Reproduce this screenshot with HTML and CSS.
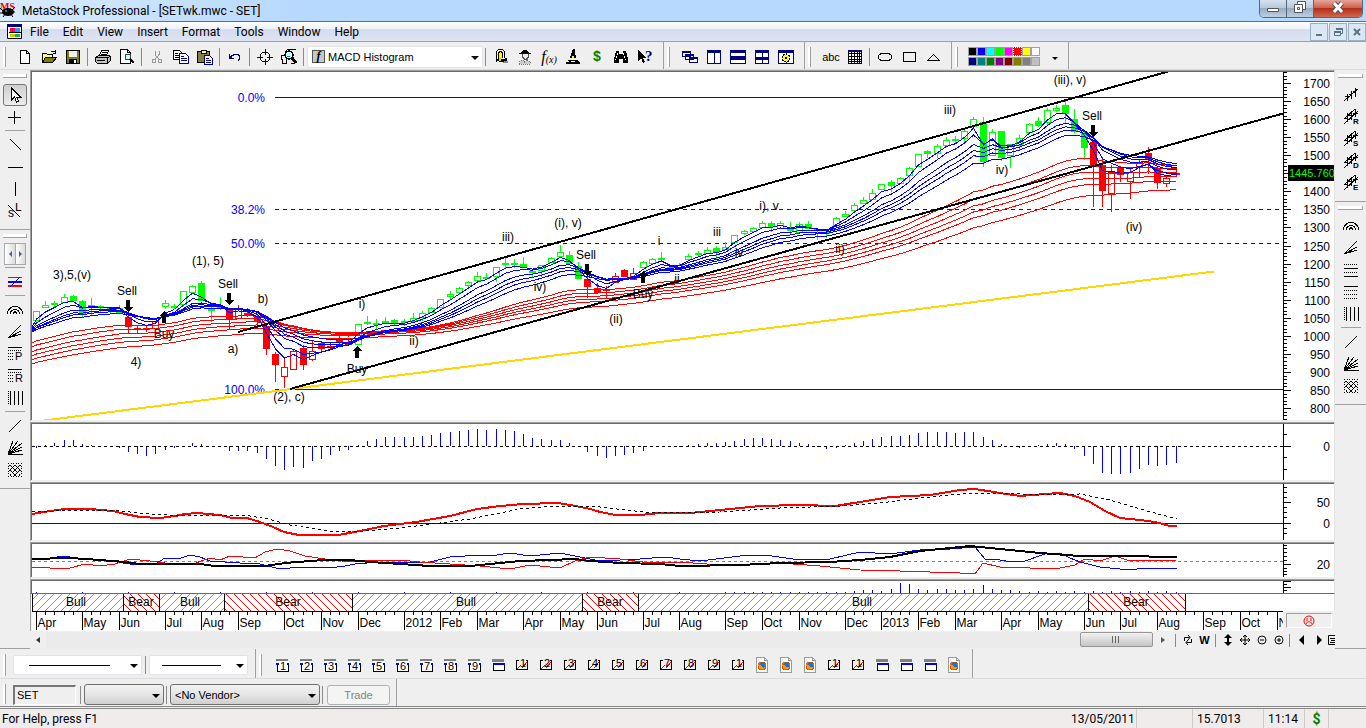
FILE: index.html
```
<!DOCTYPE html>
<html lang="en">
<head>
    <meta charset="UTF-8">
    <meta name="viewport" content="width=device-width, initial-scale=1.0">
    <title>MetaStock Professional - [SETwk.mwc - SET]</title>
    <link rel="stylesheet" href="styles.css">
</head>
<body>

    <!-- Icon symbols -->
    <svg class="symbols" aria-hidden="true">
        <symbol id="new" viewBox="0 0 16 16"><path d="M3.5 1.5h6l3 3v10h-9zM9.5 1.5v3h3" fill="#fff" stroke="#000"/></symbol>
        <symbol id="open" viewBox="0 0 16 16"><path d="M1.5 13.5v-9h4l1 1h5v3" fill="#ffff80" stroke="#000"/><path d="M1.5 13.5l3-5h11l-4 5z" fill="#808000" stroke="#000"/><path d="M9.5 3.5c1-2 3-2 5 0M14.5 1v3h-3" fill="none" stroke="#000"/></symbol>
        <symbol id="save" viewBox="0 0 16 16"><path d="M1.500 1.500h13v13h-13z" fill="#808000" stroke="#000"/><path d="M4 2h8v6H4z" fill="#efefef"/><path d="M4 10h8v5H4z" fill="#000"/><path d="M9 11h2v3H9z" fill="#fff"/></symbol>
        <symbol id="print" viewBox="0 0 16 16"><path d="M4.500 6.500l2-5h7l-2 5" fill="#fff" stroke="#000"/><path d="M6.500 3.500h5M6 5.500h5" stroke="#000"/><path d="M.5 8.500l3-2h10l2 1v4l-3 3h-10l-2-2z" fill="#c0c0c0" stroke="#000"/><path d="M.5 8.500h12v6M2 11.500h8M12.500 8.500l3-1" fill="none" stroke="#000"/><path d="M8 12h2v1H8z" fill="#ff0"/></symbol>
        <symbol id="preview" viewBox="0 0 16 16"><path d="M1.500.5h7l3 3v11h-10zM8.500.5v3h3" fill="#fff" stroke="#000"/><circle cx="9" cy="8" r="3" fill="#bff" stroke="#444"/><path d="M11 10l4 4" stroke="#000" stroke-width="2"/></symbol>
        <symbol id="cut" viewBox="0 0 16 16"><path d="M6 1.500v4l4 5M10 1.500v4l-4 5" fill="none" stroke="#999"/><circle cx="5" cy="12" r="2" fill="none" stroke="#999"/><circle cx="11" cy="12" r="2" fill="none" stroke="#999"/></symbol>
        <symbol id="copy" viewBox="0 0 16 16"><path d="M.5 1.500h6l2 2v7h-8z" fill="#fff" stroke="#000"/><path d="M2 4.500h3M2 6.500h4M2 8.500h4" stroke="#000"/><path d="M6.500 4.500h6l3 3v7h-9z" fill="#fff" stroke="#000080"/><path d="M8 7.500h3M8 9.500h6M8 11.500h6" stroke="#000080"/></symbol>
        <symbol id="paste" viewBox="0 0 16 16"><path d="M.5 2.500h12v11h-12z" fill="#808040" stroke="#000"/><path d="M4 1h5v3H4z" fill="#ff8" stroke="#000"/><path d="M7.500 6.500h5l3 3v6h-8z" fill="#fff" stroke="#000080"/><path d="M9 9.500h3M9 11.500h5M9 13.500h5" stroke="#000080"/></symbol>
        <symbol id="undo" viewBox="0 0 16 16"><path d="M3 8.500c3-4 10-4 10 0 0 2-1 2-2 3M2.500 5v4h4" fill="none" stroke="#000080"/><path d="M2 6v4h4z" fill="#000080"/></symbol>
        <symbol id="target" viewBox="0 0 16 16"><circle cx="8" cy="8" r="5" fill="none" stroke="#000"/><path d="M8.500 0v6M8.500 10v6M0 8.500h6M10 8.500h6" stroke="#000080"/></symbol>
        <symbol id="magnify" viewBox="0 0 16 16"><path d="M3.500 3.500l3-3h8M.5 6.500h5v8h-4v-4h-1zM9.500 14h3" fill="none" stroke="#000"/><circle cx="8" cy="6" r="4" fill="#bff" stroke="#000" stroke-width="1.500"/><path d="M6 7h3" stroke="#088"/><path d="M11 9l4 5" stroke="#000" stroke-width="3"/></symbol>
        <symbol id="alert" viewBox="0 0 16 16"><path d="M3.500 13V4c0-5 8-5 8 0v5" fill="#fff" stroke="#000"/><path d="M5.500 10V5c0-3 4-3 4 0v4" fill="#ff0" stroke="#000"/><path d="M4 10h5l5-1v4H7l-3-1z" fill="#000"/><path d="M6 8h2v4H6z" fill="#dd0"/><path d="M12 12h3v2H9z" fill="#888"/></symbol>
        <symbol id="advisor" viewBox="0 0 16 16"><path d="M4 4c0-4 8-4 8 0" fill="#000"/><path d="M2 4h12v1H2z" fill="#000080"/><path d="M5.500 5v3l2 2h2l2-2V5" fill="#eee" stroke="#555"/><path d="M2.500 15v-2l3-2 2 2 3-2 3 2v2z" fill="#ccc" stroke="#777" stroke-dasharray="1 1"/></symbol>
        <symbol id="tester" viewBox="0 0 16 16"><path d="M8 0h2v3l1 6H5l2-6z" fill="#000"/><path d="M7 7h2v2H7z" fill="#ff0"/><path d="M3 11h9l2 2h1v2H1v-2h3z" fill="#000"/><path d="M6 12h4" stroke="#fff"/></symbol>
        <symbol id="binoc" viewBox="0 0 16 16"><path d="M3 2h3v3h4V2h3l2 8v4h-5v-4H6v4H1v-4z" fill="#000"/><path d="M4.500 4l-2 7M10.500 4l2 7" stroke="#fff" stroke-dasharray="2 1"/></symbol>
        <symbol id="cursor" viewBox="0 0 16 16"><path d="M4.500 1v12l3-3 2 5 2-1-2-4h4z" fill="#fff" stroke="#000"/></symbol>
        <symbol id="cascade" viewBox="0 0 16 16"><path d="M.5 2.500h8v5h-8zM3.500 5.500h8v5h-8zM7.500 8.500h8v5h-8z" fill="#fff" stroke="#000080"/><path d="M0 2h9v2H0zM3 5h9v2H3zM7 8h9v2H7z" fill="#000080"/></symbol>
        <symbol id="cols" viewBox="0 0 16 16"><path d="M1.500 1.500h13v13h-13zM8 2v12" fill="#fff" stroke="#000080"/><path d="M1 1h14v3H1z" fill="#000080"/></symbol>
        <symbol id="rows" viewBox="0 0 16 16"><path d="M.5 1.500h15v6H.5zM.5 8.500h15v6H.5z" fill="#fff" stroke="#000080"/><path d="M0 1h16v3H0zM0 8h16v3H0z" fill="#000080"/></symbol>
        <symbol id="tiles" viewBox="0 0 16 16"><path d="M1.500 1.500h13v13h-13zM8 1v14" fill="#fff" stroke="#000080"/><path d="M1 1h14v3H1zM1 8h14v3H1z" fill="#000080"/></symbol>
        <symbol id="layout" viewBox="0 0 16 16"><path d="M.5 1.500h15v13H.5zM8 1v14" fill="#fff" stroke="#000080"/><path d="M0 1h16v3H0z" fill="#000080"/><circle cx="8" cy="9" r="4" fill="#ff0" stroke="#000" stroke-dasharray="2 1"/><circle cx="8" cy="9" r="3" fill="#ff0"/><circle cx="8" cy="9" r="1" fill="#000"/></symbol>
        <symbol id="grid" viewBox="0 0 16 16"><path d="M1.500 1.500h13v13h-13zM1 4.500h14M1 7.500h14M1 10.500h14M1 12.500h14M4.500 1v14M7.500 1v14M10.500 1v14M12.500 1v14" fill="#fff" stroke="#000"/><path d="M1 1h14v2H1z" fill="#000080"/></symbol>
        <symbol id="ellipse" viewBox="0 0 16 16"><ellipse cx="8" cy="8" rx="7" ry="4" fill="none" stroke="#000"/></symbol>
        <symbol id="rect" viewBox="0 0 16 16"><path d="M2.500 3.500h12v9h-12z" fill="none" stroke="#000"/></symbol>
        <symbol id="tri" viewBox="0 0 16 16"><path d="M2.500 11.500h12l-6-6z" fill="none" stroke="#000"/></symbol>
        <symbol id="plus" viewBox="0 0 16 16"><path d="M1 8.500h13M7.500 2v13" stroke="#000"/></symbol>
        <symbol id="back" viewBox="0 0 16 16"><path d="M3 2l11 11" stroke="#000"/></symbol>
        <symbol id="hline" viewBox="0 0 16 16"><path d="M1 8.500h15" stroke="#000"/></symbol>
        <symbol id="vline" viewBox="0 0 16 16"><path d="M8.500 1v14" stroke="#000"/></symbol>
        <symbol id="stop" viewBox="0 0 16 16"><path d="M1 2l12 12" stroke="#000"/><text x="8" y="8">L</text><text x="1" y="14">s</text></symbol>
        <symbol id="multi" viewBox="0 0 16 16"><path d="M1 3.500h14" stroke="#008000"/><path d="M1 8h14" stroke="#00f" stroke-width="2"/><path d="M1 12h14" stroke="#f00" stroke-width="2"/><path d="M3 13L13 3" stroke="#00f"/></symbol>
        <symbol id="arcs" viewBox="0 0 16 16"><path d="M.5 12c0-10 15-10 15 0M3.500 12c0-6 9-6 9 0M6.500 12c0-3 3-3 3 0" fill="none" stroke="#000"/></symbol>
        <symbol id="fan" viewBox="0 0 16 16"><path d="M1 14L14 1M1 14l13-7M1 14l13-4" stroke="#000"/></symbol>
        <symbol id="proj" viewBox="0 0 16 16"><path d="M1 1.500h14" stroke="#000"/><path d="M1 4.500h14M1 7.500h6M1 10.500h6M1 13.500h6" stroke="#000" stroke-dasharray="1 1"/></symbol>
        <symbol id="fib" viewBox="0 0 16 16"><path d="M1 2.500h14M1 10.500h14" stroke="#000" stroke-dasharray="1 1"/><path d="M1 6.500h14M1 14.500h14" stroke="#000"/></symbol>
        <symbol id="quad" viewBox="0 0 16 16"><path d="M1 2.500h14" stroke="#000"/><path d="M1 6.500h14M1 10.500h14M1 14.500h14" stroke="#000" stroke-dasharray="1 1"/></symbol>
        <symbol id="bars" viewBox="0 0 16 16"><path d="M1.500 1v14" stroke="#000" stroke-dasharray="1 1"/><path d="M3.500 1v14M7.500 1v14M11.500 1v14M15.500 1v14" stroke="#000"/></symbol>
        <symbol id="slash" viewBox="0 0 16 16"><path d="M2 14L14 2" stroke="#000"/></symbol>
        <symbol id="gann" viewBox="0 0 16 16"><path d="M1 14.500h15M1 14L6 1M1 14L11 1M1 14L15 3M1 14l14-7M1 14l14-4" stroke="#000"/></symbol>
        <symbol id="mesh" viewBox="0 0 16 16"><path d="M1 1l14 14M6 1l9 9M11 1l4 4M1 6l9 9M1 11l4 4M15 1L1 15M10 1L1 10M5 1L1 5M15 6l-9 9M15 11l-4 4" stroke="#000" stroke-dasharray="2 1"/></symbol>
        <symbol id="regress" viewBox="0 0 16 16"><path d="M1 14L15 2M4.500 7v7M8.500 4v8M12.500 1v9M2 9h2M6 7h2M10 4h2M13 2h2" stroke="#000"/></symbol>
        <symbol id="channel" viewBox="0 0 16 16"><path d="M1 10L12 0M1 15L15 2M4.500 4v9M8.500 2v9M12.500 0v8M2 9h2M6 6h2M10 4h5" stroke="#000"/></symbol>
        <symbol id="win" viewBox="0 0 16 16"><path d="M2 2h12v3H2z" fill="#808080"/><path d="M3.500 6.500h11v7h-11z" fill="#fff" stroke="#000"/><path d="M3 6h12v2H3z" fill="#00f"/></symbol>
        <symbol id="numwin" viewBox="0 0 16 16"><path d="M2 2h12v2H2z" fill="#808080"/><path d="M3 4h12v10H3z" fill="#fff"/><path d="M5 6.500H3.500v8h11v-8H13" fill="none" stroke="#000"/><path d="M2 6h3v2H2zM13 6h2v2h-2z" fill="#00f"/></symbol>
        <symbol id="numchart" viewBox="0 0 16 16"><path d="M5 3.500H2.500v9h11v-9H12" fill="none" stroke="#000"/><path d="M3 12l4-4M8 11l5-6" stroke="#f00"/></symbol>
        <symbol id="fox" viewBox="0 0 16 16"><path d="M2.500.5h8l3 3v12h-11zM10.500.5v3h3" fill="#fff" stroke="#999"/><circle cx="8" cy="9" r="4.500" fill="#e66000"/><circle cx="8.500" cy="8" r="3" fill="#2c6fb5"/><path d="M4 8c1 5 5 5 8 2-2 1-4 1-5-2z" fill="#ff9500"/></symbol>
    </svg>

    <!-- Title bar -->
    <header class="titlebar">
        <svg class="logo" viewBox="0 0 16 18"><text x="0" y="10">MS</text><ellipse cx="8" cy="12" rx="6" ry="4" fill="#000"/><path d="M0 8l4 4M0 13h4M3 17l3-4M10 13l3 4M12 12h3M11 11l4-4" stroke="#000"/><circle cx="6" cy="11" r="1" fill="#0aa"/></svg>
        <h1>MetaStock Professional - [SETwk.mwc - SET]</h1>
        <div class="window-buttons">
            <button aria-label="Minimize"><svg viewBox="0 0 16 16"><path d="M2.500 8.500h11v3h-11z" fill="#fff" stroke="#555"/></svg></button>
            <button aria-label="Restore"><svg viewBox="0 0 16 16"><path d="M5.500 1.500h8v8h-8z" fill="#fff" stroke="#555"/><path d="M2.500 4.500h8v8h-8z" fill="#fff" stroke="#555"/><path d="M5.500 7.500h2v2h-2z" fill="none" stroke="#555"/></svg></button>
            <button class="close" aria-label="Close"><svg viewBox="0 0 16 16"><path d="M4 3l8 9M12 3l-8 9" stroke="#555" stroke-width="5"/><path d="M4 3l8 9M12 3l-8 9" stroke="#fff" stroke-width="3"/></svg></button>
        </div>
    </header>

    <!-- Menu -->
    <nav class="menubar">
        <svg class="doc-icon" viewBox="0 0 15 15"><path d="M.5.5h14v14H.5z" fill="#fff" stroke="#000"/><path d="M0 0h15v3H0z" fill="#000080"/><path d="M3 4h10v4H3z" fill="#f05"/><path d="M8 4h5v4H8z" fill="#29f"/><path d="M3 10h10v3H3z" fill="#cc0"/><path d="M8 10h5v3H8z" fill="#2a4"/><path d="M2 8.500h12" stroke="#000"/></svg>
        <button>File</button>
        <button>Edit</button>
        <button>View</button>
        <button>Insert</button>
        <button>Format</button>
        <button>Tools</button>
        <button>Window</button>
        <button>Help</button>
        <div class="mdi-buttons">
            <button aria-label="Minimize chart"><svg viewBox="0 0 16 16"><path d="M5 11h6" stroke="#5d7285" stroke-width="2"/></svg></button>
            <button aria-label="Restore chart"><svg viewBox="0 0 16 16"><path d="M6.500 6V4.500h6v5H11M4.500 7.500h6v4h-6z" fill="none" stroke="#5d7285"/><path d="M6 4h7v2H6zM4 7h7v2H4z" fill="#5d7285"/></svg></button>
            <button aria-label="Close chart"><svg viewBox="0 0 16 16"><path d="M5 5l6 6M11 5l-6 6" stroke="#5d7285" stroke-width="2"/></svg></button>
        </div>
    </nav>

    <!-- Main toolbars -->
    <div class="toolbars">
        <div class="group">
            <button class="tool" aria-label="New"><svg><use href="#new"/></svg></button>
            <button class="tool" aria-label="Open"><svg><use href="#open"/></svg></button>
            <button class="tool" aria-label="Save"><svg><use href="#save"/></svg></button>
            <i class="sep"></i>
            <button class="tool" aria-label="Print"><svg><use href="#print"/></svg></button>
            <button class="tool" aria-label="Print preview"><svg><use href="#preview"/></svg></button>
            <i class="sep"></i>
            <button class="tool" aria-label="Cut"><svg><use href="#cut"/></svg></button>
            <button class="tool" aria-label="Copy"><svg><use href="#copy"/></svg></button>
            <button class="tool" aria-label="Paste"><svg><use href="#paste"/></svg></button>
            <i class="sep"></i>
            <button class="tool" aria-label="Undo"><svg><use href="#undo"/></svg></button>
            <i class="sep"></i>
            <button class="tool" aria-label="Crosshair"><svg><use href="#target"/></svg></button>
            <button class="tool" aria-label="Data window"><svg><use href="#magnify"/></svg></button>
            <i class="sep"></i>
            <span class="combo indicator">
                <b class="badge">f</b>
                <select aria-label="Indicator"><option>MACD Histogram</option></select>
            </span>
            <i class="sep"></i>
            <button class="tool" aria-label="Alerts"><svg><use href="#alert"/></svg></button>
            <button class="tool" aria-label="Expert advisor"><svg><use href="#advisor"/></svg></button>
            <button class="tool fx">f<small>(x)</small></button>
            <button class="tool" aria-label="System tester"><svg><use href="#tester"/></svg></button>
            <button class="tool dollar">$</button>
            <button class="tool" aria-label="Explorer"><svg><use href="#binoc"/></svg></button>
            <button class="tool help" aria-label="Help"><svg viewBox="0 0 16 16"><path d="M1 1v11l3-3 2 5 2-1-2-4h4z" fill="#000"/><text x="8" y="12">?</text></svg></button>
        </div>
        <div class="group">
            <button class="tool" aria-label="Cascade"><svg><use href="#cascade"/></svg></button>
            <button class="tool" aria-label="Columns"><svg><use href="#cols"/></svg></button>
            <button class="tool" aria-label="Rows"><svg><use href="#rows"/></svg></button>
            <button class="tool" aria-label="Tile"><svg><use href="#tiles"/></svg></button>
            <button class="tool" aria-label="Layout"><svg><use href="#layout"/></svg></button>
        </div>
        <div class="group">
            <button class="tool abc">abc</button>
            <button class="tool" aria-label="Grid"><svg><use href="#grid"/></svg></button>
            <i class="sep"></i>
            <button class="tool" aria-label="Ellipse"><svg><use href="#ellipse"/></svg></button>
            <button class="tool" aria-label="Rectangle"><svg><use href="#rect"/></svg></button>
            <button class="tool" aria-label="Triangle"><svg><use href="#tri"/></svg></button>
        </div>
        <div class="group">
            <div class="palette" id="palette"></div>
            <button class="more" aria-label="More colors"></button>
        </div>
    </div>

    <main class="workspace">
        <!-- Line tools -->
        <aside class="sidebar">
            <div class="vgroup">
                <button class="vtool active" aria-label="Select"><svg><use href="#cursor"/></svg></button>
                <button class="vtool" aria-label="Crosshair"><svg><use href="#plus"/></svg></button>
                <i class="hsep"></i>
                <button class="vtool" aria-label="Trendline"><svg><use href="#back"/></svg></button>
                <button class="vtool" aria-label="Horizontal line"><svg><use href="#hline"/></svg></button>
                <button class="vtool" aria-label="Vertical line"><svg><use href="#vline"/></svg></button>
                <button class="vtool" aria-label="Stop and limit"><svg><use href="#stop"/></svg></button>
            </div>
            <div class="vgroup">
                <div class="spin">
                    <button class="prev" aria-label="Previous"></button>
                    <button class="next" aria-label="Next"></button>
                </div>
                <i class="hsep"></i>
                <button class="vtool" aria-label="Line styles"><svg><use href="#multi"/></svg></button>
                <i class="hsep"></i>
                <button class="vtool" aria-label="Fibonacci arcs"><svg><use href="#arcs"/></svg></button>
                <button class="vtool" aria-label="Fibonacci fan"><svg><use href="#fan"/></svg></button>
                <button class="vtool proj" aria-label="Projection"><svg viewBox="0 0 16 16"><use href="#proj"/><text x="8" y="14">P</text></svg></button>
                <button class="vtool proj" aria-label="Retracement"><svg viewBox="0 0 16 16"><use href="#proj"/><text x="8" y="14">R</text></svg></button>
                <button class="vtool" aria-label="Time zones"><svg><use href="#bars"/></svg></button>
                <i class="hsep"></i>
                <button class="vtool" aria-label="Gann line"><svg><use href="#slash"/></svg></button>
                <button class="vtool" aria-label="Gann fan"><svg><use href="#gann"/></svg></button>
                <button class="vtool" aria-label="Gann grid"><svg><use href="#mesh"/></svg></button>
            </div>
        </aside>

        <!-- Chart panes -->
        <section class="chart">
            <div class="pane price">
                <svg class="plot" id="pricePlot"></svg>
                <svg class="axis" id="priceAxis"></svg>
            </div>
            <div class="pane medium">
                <svg class="plot" id="histPlot"></svg>
                <svg class="axis" id="histAxis"></svg>
            </div>
            <div class="pane medium">
                <svg class="plot" id="macdPlot"></svg>
                <svg class="axis" id="macdAxis"></svg>
            </div>
            <div class="pane small">
                <svg class="plot" id="dmiPlot"></svg>
                <svg class="axis" id="dmiAxis"></svg>
            </div>
            <div class="pane volume">
                <svg class="plot" id="volPlot"></svg>
                <svg class="axis" id="volAxis"></svg>
            </div>
            <div class="trend"><svg id="trend"></svg></div>
            <div class="timeline">
                <svg class="plot" id="timeline"></svg>
                <div class="mood"><svg viewBox="0 0 12 12"><circle cx="6" cy="6" r="5" fill="none" stroke="#f00"/><path d="M4 3v3M8 3v3M3 9c1-3 5-3 6 0" fill="none" stroke="#f00"/></svg></div>
            </div>
            <div class="scroll">
                <button class="arrow left" aria-label="Scroll left"></button>
                <div class="track"><button class="thumb" aria-label="Scroll position"></button></div>
                <button class="arrow right" aria-label="Scroll right"></button>
                <i class="sep"></i>
                <button class="mini" aria-label="Refresh"><svg viewBox="0 0 12 12"><path d="M2.500 7V3.500h5M6 1l2 2.500L6 6M9.500 5v3.500h-5M6 6L4 8.500 6 11" fill="none" stroke="#000"/></svg></button>
                <button class="mini">W</button>
                <i class="sep"></i>
                <button class="mini" aria-label="Scale"><svg viewBox="0 0 12 12"><path d="M6 1v10" stroke="#000" stroke-width="2"/><path d="M2 4l4-4 4 4zM2 8l4 4 4-4z"/></svg></button>
                <button class="mini" aria-label="Move"><svg viewBox="0 0 12 12"><path d="M6 1v10M1 6h10M4 3l2-2 2 2M4 9l2 2 2-2M3 4L1 6l2 2M9 4l2 2-2 2" fill="none" stroke="#000"/></svg></button>
                <button class="mini" aria-label="Zoom out"><svg viewBox="0 0 12 12"><circle cx="6" cy="6" r="4" fill="none" stroke="#000"/><path d="M4 6h4" stroke="#000"/></svg></button>
                <button class="mini" aria-label="Zoom in"><svg viewBox="0 0 12 12"><circle cx="6" cy="6" r="4" fill="none" stroke="#000"/><path d="M4 6h4M6 4v4" stroke="#000"/></svg></button>
                <i class="sep"></i>
                <button class="mini" aria-label="Previous security"><svg viewBox="0 0 12 12"><path d="M8 1v10L3 6z"/></svg></button>
                <button class="mini" aria-label="Next security"><svg viewBox="0 0 12 12"><path d="M4 1v10l5-5z"/></svg></button>
                <button class="mini list" aria-label="Choose security"><svg viewBox="0 0 8 12"><path d="M8 1.500H1.500v9H8M3 4.500h5M4 6.500h4M3 8.500h5" fill="none" stroke="#000"/></svg></button>
            </div>
        </section>

        <aside class="sidebar right">
            <div class="vgroup">
                <button class="vtool" aria-label="Regression"><svg><use href="#regress"/></svg></button>
                <button class="vtool channel" aria-label="Raff channel"><svg viewBox="0 0 16 16"><use href="#channel"/><text x="10" y="15">R</text></svg></button>
                <button class="vtool channel" aria-label="Standard deviation channel"><svg viewBox="0 0 16 16"><use href="#channel"/><text x="10" y="15">S</text></svg></button>
                <button class="vtool channel" aria-label="Deviation channel"><svg viewBox="0 0 16 16"><use href="#channel"/><text x="10" y="15">D</text></svg></button>
                <button class="vtool channel" aria-label="Error channel"><svg viewBox="0 0 16 16"><use href="#channel"/><text x="10" y="15">E</text></svg></button>
            </div>
            <div class="vgroup">
                <button class="vtool" aria-label="Arcs"><svg><use href="#arcs"/></svg></button>
                <button class="vtool" aria-label="Fan"><svg><use href="#fan"/></svg></button>
                <button class="vtool" aria-label="Retracement levels"><svg><use href="#fib"/></svg></button>
                <button class="vtool" aria-label="Quadrant lines"><svg><use href="#quad"/></svg></button>
                <button class="vtool" aria-label="Cycle lines"><svg><use href="#bars"/></svg></button>
                <i class="hsep"></i>
                <button class="vtool" aria-label="Line"><svg><use href="#slash"/></svg></button>
                <button class="vtool" aria-label="Speed fan"><svg><use href="#gann"/></svg></button>
                <button class="vtool" aria-label="Mesh"><svg><use href="#mesh"/></svg></button>
            </div>
        </aside>
    </main>

    <!-- Line style and template toolbars -->
    <div class="toolbars bottom">
        <div class="group">
            <span class="combo line-style"><select aria-label="Line style"><option></option></select></span>
            <i class="sep"></i>
            <span class="combo line-weight"><select aria-label="Line weight"><option></option></select></span>
        </div>
        <div class="group" id="templates"></div>
    </div>

    <!-- Trading toolbar -->
    <div class="toolbars trading">
        <div class="group">
            <input class="symbol" type="text" value="SET" aria-label="Symbol">
            <i class="sep"></i>
            <span class="combo raised account"><select aria-label="Account"><option></option></select></span>
            <i class="sep"></i>
            <span class="combo raised vendor"><select aria-label="Vendor"><option>&lt;No Vendor&gt;</option></select></span>
            <i class="sep"></i>
            <button class="trade" disabled>Trade</button>
        </div>
    </div>

    <footer class="statusbar">
        <span class="help-text">For Help, press F1</span>
        <span class="cell date">13/05/2011</span>
        <span class="cell blank"></span>
        <span class="cell value">15.7013</span>
        <span class="cell time">11:14</span>
        <span class="cell money">$</span>
        <span class="cell last"></span>
    </footer>

    <script src="chart.js"></script>
</body>
</html>
```
FILE: styles.css
```
* {
    box-sizing: border-box;
}

body {
    margin: 0;
    min-height: 100vh;
    display: flex;
    flex-direction: column;
    font-family: Roboto, "Noto Sans", sans-serif;
    font-size: 12px;
    color: #000;
    background: #efefef;
}

button,
select,
input {
    font: inherit;
    color: inherit;
    margin: 0;
    padding: 0;
    border: none;
    border-radius: 0;
    background: none;
}

.symbols {
    position: absolute;
    width: 0;
    height: 0;
}

svg {
    display: block;
    font-family: "Liberation Sans", Arial, sans-serif;
}

/* Title bar */
.titlebar {
    display: flex;
    height: 22px;
    background: linear-gradient(to right, #d9ebfe, #b7d9fd 22%, #b7d9fd);
    border-bottom: 1px solid #5f6f80;
}

.logo {
    width: 16px;
    height: 18px;
    margin-right: 6px;
    font-family: "Liberation Serif", serif;
    font-size: 10px;
    font-weight: bold;
    fill: #e00;
}

.titlebar h1 {
    flex: 1;
    margin: 0;
    font-size: 12px;
    font-weight: 400;
    line-height: 22px;
}

.window-buttons {
    display: flex;
    height: 18px;
    margin-right: 3px;
    border: 1px solid #58677a;
    border-top: none;
    border-radius: 0 0 5px 5px;
    overflow: hidden;
}

.window-buttons button {
    width: 27px;
    display: flex;
    justify-content: center;
    border-right: 1px solid #58677a;
    background: linear-gradient(#d5e2ef, #b9c9da 45%, #98acc2 50%, #bdd0e2);
}

.window-buttons .close {
    width: 48px;
    border-right: none;
    background: linear-gradient(#e5a79b, #d0604c 45%, #b5301b 50%, #d0664c);
}

.window-buttons svg {
    width: 16px;
    height: 16px;
}

/* Menu */
.menubar {
    display: flex;
    align-items: center;
    height: 20px;
    padding-left: 7px;
    background: linear-gradient(#fff, #eef1f8 35%, #d6dcee 40%, #dfe4f3);
    border-bottom: 1px solid #a0a0a0;
}

.doc-icon {
    width: 15px;
    height: 15px;
    margin-right: 1px;
}

.menubar > button {
    padding: 0 7px;
}

.mdi-buttons {
    display: flex;
    gap: 1px;
    margin-left: auto;
}

.mdi-buttons button {
    width: 18px;
    height: 18px;
    border: 1px solid #9bb0c4;
    background: #dbe7f3;
}

/* Toolbars */
.toolbars {
    display: flex;
    height: 28px;
    background: #efefef;
    border-bottom: 1px solid #dcdcdc;
}

.group {
    position: relative;
    display: flex;
    align-items: center;
    padding: 2px 6px 0 13px;
    border-right: 1px solid #a0a0a0;
}

.group + .group {
    padding-left: 14px;
}

.group::before {
    content: "";
    position: absolute;
    left: 3px;
    top: 5px;
    bottom: 2px;
    width: 2px;
    border-right: 1px solid #a0a0a0;
    background: #fff;
}

.tool {
    width: 24px;
    height: 24px;
    display: flex;
    align-items: center;
    justify-content: center;
}

.tool svg,
.vtool svg {
    width: 16px;
    height: 16px;
    shape-rendering: crispEdges;
}

.sep {
    width: 1px;
    height: 18px;
    margin: 0 3px 0 2px;
    background: #8a8a8a;
}

.combo {
    position: relative;
    display: flex;
    align-items: center;
    height: 22px;
    background: #fff;
    border: 1px solid #e0e3ea;
    border-radius: 2px;
    font-family: "Liberation Sans", Arial, sans-serif;
    font-size: 11px;
}

.combo select {
    flex: 1;
    height: 100%;
    appearance: none;
    outline: none;
}

.combo::after,
.more::after {
    content: "";
    position: absolute;
    right: 3px;
    top: 9px;
    border: 4px solid transparent;
    border-top-color: #000;
    border-bottom: none;
    pointer-events: none;
}

.indicator {
    width: 176px;
}

.badge {
    width: 13px;
    height: 13px;
    margin: 0 3px 0 4px;
    border: 1px solid #555;
    background: #c8c8c8;
    font: italic bold 12px/10px "Liberation Serif", serif;
    text-align: center;
}

.fx {
    font: italic 16px "Liberation Serif", serif;
}

.fx small {
    font-size: 10px;
    padding-top: 5px;
}

.dollar {
    color: #008000;
    font: bold 14px "Liberation Mono", monospace;
}

.help text {
    font: bold 15px "Liberation Serif", serif;
    fill: #000080;
}

.abc {
    font: 11px "Liberation Sans", Arial, sans-serif;
}

.palette {
    display: grid;
    grid-template-columns: repeat(8, 9px);
    gap: 1px 0;
    padding-left: 2px;
}

.palette button {
    height: 9px;
    border: 1px solid #a0a0a0;
}

.palette .chosen {
    border: 1px dotted #fff;
}

.more {
    position: relative;
    width: 22px;
    height: 24px;
}

.more::after {
    right: 4px;
    top: 12px;
    border-width: 3px;
    border-bottom: none;
}

/* Workspace */
.workspace {
    display: flex;
}

.sidebar {
    width: 30px;
    flex: none;
    border-bottom: 1px solid #a0a0a0;
}

.vgroup {
    position: relative;
    display: flex;
    flex-direction: column;
    align-items: center;
    padding: 14px 0 7px;
    border-bottom: 1px solid #a0a0a0;
}

.vgroup + .vgroup {
    padding-top: 13px;
}

.vgroup::before {
    content: "";
    position: absolute;
    left: 3px;
    right: 3px;
    top: 4px;
    height: 3px;
    background: #fff;
    border-bottom: 1px solid #a0a0a0;
    border-right: 1px solid #a0a0a0;
}

.sidebar.right {
    width: 31px;
}

.vtool {
    width: 24px;
    height: 22px;
    display: flex;
    align-items: center;
    justify-content: center;
}

.vtool text {
    font: bold 9px "Liberation Serif", serif;
}

.proj text {
    font: 11px "Liberation Sans", Arial, sans-serif;
}

.channel text {
    font: bold 8px "Liberation Sans", Arial, sans-serif;
}

.vtool.active {
    border: 1px solid #777;
    border-radius: 3px;
    background: linear-gradient(#cfcfcf, #ececec);
}

.hsep {
    width: 20px;
    height: 1px;
    margin: 2px 0 3px;
    background: #a0a0a0;
}

.spin {
    display: flex;
    height: 22px;
    border: 1px solid #a9a9b0;
}

.spin button {
    display: flex;
    width: 10px;
    align-items: center;
    justify-content: center;
    background: linear-gradient(to right, #fff, #dcdcdc);
}

.spin .prev::after {
    content: "";
    border: 3px solid transparent;
    border-right-color: #4a5f95;
    border-left: none;
}

.spin .next::after {
    content: "";
    border: 3px solid transparent;
    border-left-color: #4a5f95;
    border-right: none;
}

.spin .next {
    border-left: 1px solid #a9a9b0;
}

/* Chart */
.chart {
    flex: 1;
    min-width: 0;
}

.pane {
    display: flex;
    height: 60px;
    background: #fff;
    border-top: 1px solid #a0a0a0;
    border-left: 1px solid #a0a0a0;
    border-bottom: 2px solid #efefef;
    border-right: 1px solid #e3e3e3;
    box-shadow: inset 1px 1px #696969;
    padding: 1px 0 0 1px;
}

.price {
    height: 352px;
}

.small {
    height: 37px;
}

.volume {
    height: 14px;
    border-bottom: none;
}

.plot {
    flex: 1;
    min-width: 0;
    height: 100%;
}

.axis {
    width: 51px;
    height: 100%;
}

.plot,
.axis,
.trend svg {
    font-size: 12px;
    shape-rendering: crispEdges;
}

.trend {
    height: 18px;
    padding-left: 1px;
    background: #fff;
    border: 1px solid #696969;
    border-bottom: none;
    border-left-color: #a0a0a0;
    border-right-color: #e3e3e3;
}

.trend svg {
    width: 100%;
    height: 17px;
}

.timeline {
    display: flex;
    height: 20px;
    padding-left: 1px;
    border-left: 1px solid #a0a0a0;
}

.timeline .plot {
    background: #fff;
}

.mood {
    width: 46px;
    margin: 2px 3px 3px;
    border: 1px solid #fff;
    border-top-color: #a0a0a0;
    border-left-color: #a0a0a0;
    display: flex;
    align-items: center;
    justify-content: center;
}

.mood svg {
    width: 12px;
    height: 12px;
}

.scroll {
    display: flex;
    align-items: center;
    height: 18px;
}

.track {
    flex: 1;
    display: flex;
    justify-content: flex-end;
    height: 16px;
    background: #ebebeb;
}

.thumb {
    width: 73px;
    height: 15px;
    border: 1px solid #979797;
    border-radius: 2px;
    background: repeating-linear-gradient(to right, #666 0 1px, transparent 1px 3px) center / 9px 7px no-repeat, linear-gradient(#f3f3f3, #dcdcdc 50%, #c4c4c4);
}

.arrow {
    width: 16px;
    height: 16px;
    display: flex;
    align-items: center;
    justify-content: center;
}

.arrow.right {
    width: 20px;
}

.arrow::after {
    content: "";
    border: 3px solid transparent;
}

.arrow.left::after {
    border-right: 4px solid #333;
    border-left: none;
}

.arrow.right::after {
    border-left: 4px solid #555;
    border-right: none;
}

.scroll .sep {
    height: 13px;
}

.mini {
    width: 17px;
    flex: none;
    display: flex;
    justify-content: center;
    font: bold 11px "Liberation Sans", Arial, sans-serif;
}

.mini svg {
    width: 12px;
    height: 12px;
}

.mini.list,
.mini.list svg {
    width: 8px;
}

/* Bottom bars */
.bottom {
    height: 30px;
}

.bottom .combo {
    height: 20px;
    margin-right: 1px;
}

.line-style {
    width: 129px;
}

.line-style select {
    background: linear-gradient(#000, #000) 15px 9px / 81px 1px no-repeat;
}

.line-weight {
    width: 99px;
}

.line-weight select {
    background: linear-gradient(#000, #000) 12px 9px / 59px 1px no-repeat;
}

.bottom .combo::after {
    top: 8px;
}

#templates text {
    font-size: 11px;
    text-anchor: middle;
}

.trading {
    border-bottom: 1px solid #888;
}

.trading .group {
    padding-top: 4px;
}

.symbol {
    width: 63px;
    height: 20px;
    margin-right: 2px;
    padding-left: 2px;
    border: 1px solid #fff;
    border-top: 2px solid #777;
    border-left: 2px solid #777;
    background: #efefef;
    font: 11px "Liberation Sans", Arial, sans-serif;
}

.raised {
    height: 21px;
    border: 1px solid #707070;
    border-radius: 3px;
    background: linear-gradient(#f2f2f2, #e6e6e6 50%, #d0d0d0);
    padding-left: 4px;
}

.account {
    width: 80px;
}

.vendor {
    width: 150px;
}

.trade {
    width: 63px;
    height: 20px;
    margin-left: 1px;
    border: 1px solid #adb2b5;
    border-radius: 3px;
    background: #f4f4f4;
    color: #838383;
    font: 11px "Liberation Sans", Arial, sans-serif;
}

/* Status bar */
.statusbar {
    display: flex;
    flex: 1;
    min-height: 20px;
    margin-top: 1px;
    line-height: 20px;
    background: #f0ecec;
    border-top: 1px solid #888;
}

.help-text {
    flex: 1;
    padding-left: 2px;
}

.cell {
    padding-left: 4px;
    border-right: 1px solid #cfcaca;
}

.date {
    width: 70px;
}

.blank {
    width: 56px;
}

.value {
    width: 71px;
}

.time {
    width: 41px;
}

.money {
    width: 24px;
    padding: 0;
    text-align: center;
    color: #008000;
    font-size: 14px;
    font-weight: bold;
}

.last {
    width: 37px;
    border: none;
}
```
FILE: chart.js
```
const NS = "http://www.w3.org/2000/svg";
const LEFT = 32;
const AXIS = 1283;
const WEEK = 9.19;

function add(parent, tag, attrs, text) {
    const node = document.createElementNS(NS, tag);
    for (const key in attrs) node.setAttribute(key, attrs[key]);
    if (text !== undefined) node.textContent = text;
    parent.appendChild(node);
    return node;
}

// every layer shares one coordinate system, shifted into its own pane
function layer(id, x, y) {
    return add(document.getElementById(id), "g", { transform: `translate(${-x},${-y})` });
}

function line(g, x1, y1, x2, y2, color, width = 1, dash = "none") {
    return add(g, "line", { x1, y1, x2, y2, stroke: color, "stroke-width": width, "stroke-dasharray": dash });
}

function curve(g, points, color, width = 1, dash = "none") {
    return add(g, "polyline", { points: points.join(" "), fill: "none", stroke: color, "stroke-width": width, "stroke-dasharray": dash });
}

const weekX = i => Math.round(36 + WEEK * i) + 0.5;

// candles: kind, high, top, bottom, low (g/r hollow, G/R filled)
const candles = `g 311 311 321 321|g 301 305 308 308|g 301 303 304 308|g 294 297 303 303|G 295 296 301 301|G 300 301 314 317
g 298 305 307 315|G 305 306 308 313|G 307 308 309 314|g 305 308 313 314|R 315 317 327 334|r 326 328 330 333
r 326 328 329 332|r 321 321 329 329|g 300 303 307 309|g 304 306 307 309|g 291 291 305 305|g 285 286 293 293
G 281 283 301 301|G 303 309 311 322|g 297 307 308 310|R 308 310 320 330|r 305 309 319 319|r 308 313 314 317
R 315 317 322 327|R 324 326 349 355|R 352 354 365 382|r 358 367 377 388|r 350 351 370 370|R 345 348 365 370
r 340 351 360 361|R 341 343 349 353|r 342 346 347 350|r 333 340 341 345|r 339 342 345 346|g 324 324 345 345
g 316 322 323 325|g 319 323 324 330|g 317 321 323 323|G 319 320 323 325|G 319 321 323 326|g 313 318 322 322
g 311 313 318 321|g 307 308 313 313|g 299 299 308 308|g 291 294 297 299|g 287 288 293 295|g 281 282 286 287
g 272 276 281 281|g 273 277 278 280|g 267 267 277 282|g 258 263 264 269|G 259 263 265 268|G 257 264 268 268
g 269 271 272 278|g 265 265 271 277|g 257 258 263 263|g 245 252 257 257|G 251 255 264 264|G 262 266 279 279
R 277 279 287 298|R 283 288 293 293|R 286 289 291 299|r 273 276 283 283|R 269 270 277 277|r 268 273 280 280
g 261 262 268 268|g 258 259 264 264|g 252 258 259 262|G 266 267 270 271|g 263 265 268 268|g 254 256 260 260
g 251 253 254 256|g 247 250 254 254|G 246 248 252 259|g 242 247 250 250|g 235 235 243 243|g 230 231 234 235
g 227 228 232 232|g 221 223 228 228|G 221 223 227 232|g 221 223 229 229|G 222 227 231 235|g 222 224 233 233
G 221 224 229 229|G 228 229 231 240|g 229 232 233 238|g 217 218 230 230|g 211 214 217 217|g 203 205 211 211
g 197 200 204 204|g 189 193 200 200|g 184 184 190 190|G 180 182 186 192|g 177 178 184 184|g 167 168 176 182
g 154 154 167 167|G 150 151 154 158|g 144 146 154 158|g 137 140 146 146|G 136 139 141 143|g 130 131 139 143
g 117 119 127 127|G 117 122 162 167|g 129 132 156 156|G 131 131 158 161|g 144 144 156 168|g 135 138 146 150
g 123 124 133 134|G 117 121 126 127|g 108 110 123 125|g 105 108 111 112|G 101 105 114 123|G 109 119 132 133
G 132 133 148 160|R 140 142 166 207|R 157 165 191 207|r 165 172 194 212|R 166 168 175 182|r 169 172 182 199
r 160 162 168 177|R 147 153 160 174|R 166 168 183 189|r 176 178 184 187|r 167 173 175 177`
    .split(/[|\n]/).map(row => {
        const [kind, ...y] = row.trim().split(" ");
        return { kind, high: +y[0], top: +y[1], bottom: +y[2], low: +y[3] };
    });

/* ---------- price pane ---------- */
const price = layer("pricePlot", LEFT, 72);

[[97.5, "0.0%", "none"], [209.5, "38.2%", "4 4"], [243.5, "50.0%", "4 4"], [389.5, "100.0%", "none"]].forEach(([y, label, dash]) => {
    line(price, 275, y, AXIS, y, "#0000ff", 1, dash);
    add(price, "text", { x: 265, y: y + 4, "text-anchor": "end", fill: "#0000ff" }, label);
});

candles.forEach((c, i) => {
    const x = weekX(i);
    const color = c.kind.toLowerCase() === "g" ? "#00ff00" : "#ff0000";
    const filled = c.kind === c.kind.toUpperCase();
    line(price, x, c.high, x, c.top, color);
    line(price, x, c.bottom, x, c.low, color);
    add(price, "rect", {
        x: x - 3, y: c.top + 0.5, width: 6, height: Math.max(c.bottom - c.top - 1, 0.5),
        fill: filled ? color : "#fff", stroke: color
    });
});

// moving average ribbons: [period, starting level]
function ribbon(list, color) {
    list.forEach(([period, seed]) => {
        let value = seed;
        const points = [[LEFT, seed]];
        candles.forEach((c, i) => {
            const close = c.kind === c.kind.toUpperCase() ? c.bottom : c.top;
            value += (close - value) * 2 / (period + 1);
            points.push([weekX(i), Math.round(value * 10) / 10]);
        });
        curve(price, points, color);
    });
}

ribbon([[30, 343], [35, 347], [40, 352], [45, 356], [50, 360], [60, 364]], "#ff0000");
ribbon([[3, 327], [5, 329], [8, 330], [10, 331], [12, 331], [15, 332]], "#0000ff");

line(price, 40, 421, 1214, 271.5, "#ffd700", 2);
line(price, 238, 332, 1170, 71, "#000", 2);
line(price, 290, 389, AXIS, 113.5, "#000", 2);

[["3),5,(v)", 72, 279], ["(1), 5)", 208, 265], ["b)", 263, 303], ["a)", 233, 353], ["4)", 136, 366], ["(2), c)", 289, 401],
 ["i)", 362, 308], ["ii)", 414, 345], ["iii)", 508, 241], ["iv)", 540, 291], ["(i), v)", 568, 227], ["(ii)", 616, 323],
 ["i", 659, 245], ["ii", 677, 283], ["iii", 717, 236], ["iv", 739, 257], ["i), v", 769, 210], ["ii)", 840, 253],
 ["iii)", 950, 114], ["iv)", 1002, 174], ["(iii), v)", 1070, 84], ["(iv)", 1134, 231]].forEach(([label, x, y]) => {
    add(price, "text", { x, y, "text-anchor": "middle" }, label);
});

[[128, 300], [229, 293], [587, 264], [1093, 125]].forEach(([x, y]) => {
    add(price, "path", { d: `M${x - 2} ${y}h4v7h3l-5 5l-5 -5h3z` });
    add(price, "text", { x: x - 1, y: y - 5, "text-anchor": "middle" }, "Sell");
});

[[164, 311], [357, 346], [643, 271]].forEach(([x, y]) => {
    add(price, "path", { d: `M${x - 2} ${y + 12}h4v-7h3l-5 -5l-5 5h3z` });
    add(price, "text", { x, y: y + 27, "text-anchor": "middle" }, "Buy");
});

const priceAxis = layer("priceAxis", AXIS, 72);
line(priceAxis, 1283.5, 72, 1283.5, 420, "#000");
for (let p = 1730; p >= 770; p -= 10) {
    const y = Math.round(83 + (1700 - p) * 325 / 900) + 0.5;
    const major = p % 50 === 0;
    line(priceAxis, 1284, y, major ? 1291 : 1287, y, "#000");
    if (major && p !== 1450) add(priceAxis, "text", { x: 1330, y: y + 4, "text-anchor": "end" }, p);
}
add(priceAxis, "rect", { x: 1288, y: 165, width: 46, height: 16 });
add(priceAxis, "text", { x: 1289, y: 177, fill: "#00ff00", "font-size": 11 }, "1445.760");

/* ---------- lower panes ---------- */
const hist = layer("histPlot", LEFT, 424);
[-2, 1, 3, 6, 6, 2, 1, 0, 0, -2, -6, -8, -10, -8, -4, -2, 0, 3, 2, 0, -1, -5, -5, -5, -7, -13, -20, -24, -21, -22, -15, -13, -9, -5, -4,
 1, 5, 7, 9, 9, 9, 9, 10, 11, 13, 14, 15, 16, 17, 16, 17, 16, 15, 12, 8, 7, 6, 6, 3, 0, -6, -10, -12, -10, -9, -7, -5, -1, 0, -1,
 -1, 1, 2, 3, 3, 4, 5, 7, 8, 8, 7, 6, 5, 3, 2, -1, -3, -2, 1, 3, 5, 7, 9, 10, 10, 11, 13, 14, 14, 14, 13, 14, 14, 9, 6, 2, -1, -2,
 -1, 1, 2, 3, 2, -3, -10, -18, -27, -28, -28, -27, -23, -19, -20, -19, -17].forEach((v, i) => {
    if (v) line(hist, weekX(i), 446, weekX(i), 446 - v, "#0000ff");
});
line(hist, LEFT, 446.5, AXIS, 446.5, "#000", 1, "3 3");

const macd = layer("macdPlot", LEFT, 484);
line(macd, LEFT, 523.5, AXIS, 523.5, "#0000ff");
curve(macd, ["32,514 50,511 65,509 90,509 113,511 125,514 140,517 160,518 175,516 185,514 197,513 220,515 232,518 247,518 260,522 273,527 284,532 299,535 338,535 355,532 384,526 416,522 450,516 477,509 500,506 523,504 558,503 576,506 590,509 600,512 616,515 640,515 660,513 690,513 720,510 760,506 800,505 835,506 860,502 890,497 930,495 960,490 975,489 1000,493 1020,496 1045,494 1060,493 1075,496 1090,502 1105,511 1120,518 1140,520 1155,522 1170,526 1177,526"], "#ff0000", 2);
curve(macd, ["32,512 55,511 75,510 113,510 130,512 150,514 170,515 225,515 250,516 268,519 290,525 310,528 335,532 365,531 400,528 440,523 470,519 500,513 520,509 555,506 580,506 600,507 625,510 645,512 680,513 720,512 780,508 840,506 880,503 920,498 960,494 1000,493 1040,495 1080,494 1110,500 1140,509 1177,519"], "#000", 1, "3 3");

const dmi = layer("dmiPlot", LEFT, 544);
line(dmi, LEFT, 561.5, AXIS, 561.5, "#808080", 1, "3 3");
curve(dmi, ["32,560 50,558 65,556 80,559 110,561 130,564 155,564 165,558 178,559 190,555 200,557 210,561 240,563 260,564 280,569 300,567 330,568 345,566 355,564 380,562 400,563 430,562 450,557 480,555 490,556 510,553 530,556 560,553 580,557 600,561 640,559 665,557 680,559 700,561 740,556 765,555 800,560 830,559 860,552 890,554 920,550 950,549 975,547 985,559 1000,560 1012,562 1025,561 1045,554 1060,553 1070,558 1080,562 1100,567 1130,570 1145,568 1177,568"], "#0000ff");
curve(dmi, ["32,567 50,568 70,568 85,564 100,566 115,564 130,559 150,561 165,563 190,565 210,558 220,560 230,556 255,558 265,552 277,549 290,551 305,556 325,559 350,562 370,560 400,560 420,562 450,564 480,566 510,569 530,565 560,568 575,561 590,557 620,559 650,563 680,562 720,565 780,563 820,566 860,570 900,571 930,572 960,573 975,574 983,563 1000,567 1030,568 1060,568 1075,565 1085,559 1100,561 1115,556 1130,561 1177,560"], "#ff0000");
curve(dmi, ["32,559 70,558 100,560 125,562 140,564 200,564 215,566 265,566 285,563 310,561 325,560 350,560 370,562 400,564 430,566 470,566 490,564 520,561 550,560 575,559 590,561 620,563 660,564 680,566 740,565 780,563 830,562 860,560 890,557 920,551 950,548 970,546 1000,549 1040,553 1080,556 1120,556 1177,557"], "#000", 2);

const vol = layer("volPlot", LEFT, 581);
const busy = { 89: 2, 90: 3, 91: 3, 92: 2, 93: 4, 94: 10, 95: 9, 96: 4, 97: 3, 98: 4, 99: 4, 100: 3, 101: 3, 102: 4, 103: 8, 104: 4, 105: 3, 106: 3 };
candles.forEach((c, i) => {
    const height = busy[i] || (i > 106 ? 1 + i % 2 : (i * 7 % 5 === 0 || i > 75 ? 1 : 0));
    if (height) line(vol, weekX(i), 593, weekX(i), 593 - height, "#0000ff");
});

function smallAxis(id, top, height, ticks, labels) {
    const g = layer(id, AXIS, top);
    line(g, 1283.5, top, 1283.5, top + height, "#000");
    ticks.forEach(y => line(g, 1284, y + 0.5, 1287, y + 0.5, "#000"));
    labels.forEach(([y, label]) => {
        line(g, 1284, y + 0.5, 1291, y + 0.5, "#000");
        if (label) add(g, "text", { x: 1330, y: y + 5, "text-anchor": "end" }, label);
    });
}

smallAxis("histAxis", 424, 60, [434, 457, 469], [[446, "0"]]);
smallAxis("macdAxis", 484, 60, [487, 492, 497, 507, 512, 517, 528, 533], [[502, "50"], [523, "0"]]);
smallAxis("dmiAxis", 544, 40, [545, 548, 552, 556, 560, 568, 571, 574], [[564, "20"]]);
smallAxis("volAxis", 581, 20, [584, 590], [[581, ""], [587, ""]]);

/* ---------- bull / bear strip ---------- */
const trend = document.getElementById("trend");
const defs = add(trend, "defs", {});
[["bull", "#00ff00", "M-1 9L9 -1"], ["bear", "#ff0000", "M-1 -1L9 9"]].forEach(([id, color, d]) => {
    const pattern = add(defs, "pattern", { id, width: 8, height: 8, patternUnits: "userSpaceOnUse" });
    add(pattern, "path", { d, stroke: color });
});
const strip = layer("trend", LEFT, 594);
[["Bull", 32, 123, 76], ["Bear", 123, 159, 141], ["Bull", 159, 224, 190], ["Bear", 224, 352, 288], ["Bull", 352, 582, 466],
 ["Bear", 582, 638, 610], ["Bull", 638, 1088, 862], ["Bear", 1088, 1185, 1136]].forEach(([label, from, to, middle]) => {
    add(strip, "rect", { x: from + 0.5, y: 593, width: to - from, height: 19, fill: `url(#${label.toLowerCase()})`, stroke: "#000" });
    add(strip, "text", { x: middle, y: 606, "text-anchor": "middle" }, label);
});

/* ---------- time axis ---------- */
const time = layer("timeline", LEFT, 611);
line(time, LEFT, 611, AXIS, 611, "#000", 2);
for (let i = 0; i < 136; i++) line(time, weekX(i), 611, weekX(i), 615, "#000");
[[0, "Apr"], [5, "May"], [9, "Jun"], [14, "Jul"], [18, "Aug"], [22, "Sep"], [27, "Oct"], [31, "Nov"], [35, "Dec"], [40, "2012"], [44, "Feb"],
 [48, "Mar"], [53, "Apr"], [57, "May"], [61, "Jun"], [66, "Jul"], [70, "Aug"], [75, "Sep"], [79, "Oct"], [83, "Nov"], [88, "Dec"], [92, "2013"],
 [96, "Feb"], [100, "Mar"], [105, "Apr"], [109, "May"], [114, "Jun"], [118, "Jul"], [122, "Aug"], [127, "Sep"], [131, "Oct"], [135, "Nov"]].forEach(([i, label]) => {
    line(time, weekX(i), 611, weekX(i), 630, "#000");
    add(time, "text", { x: weekX(i) + 1, y: 627 }, label);
});

/* ---------- palette and template buttons ---------- */
const palette = document.getElementById("palette");
["#000", "#00f", "#0ff", "#0f0", "#f0f", "#f00", "#ff0", "#fff", "#000080", "#008080", "#008000", "#800080", "#800000", "#808000", "#808080", "#c0c0c0"].forEach((color, i) => {
    const swatch = document.createElement("button");
    swatch.style.backgroundColor = color;
    swatch.setAttribute("aria-label", "Color " + color);
    if (i === 5) swatch.className = "chosen";
    palette.appendChild(swatch);
});

const templates = document.getElementById("templates");
"w1 w2 w3 w4 w5 w6 w7 w8 w9 w c1 c2 c3 c4 c5 c6 c7 c8 c9 c1 f f f c1 c1 w w w f".split(" ").forEach(code => {
    const button = document.createElement("button");
    button.className = "tool";
    button.setAttribute("aria-label", "Template " + code);
    const svg = add(button, "svg", { viewBox: "0 0 16 16" });
    const symbol = { w: code.length > 1 ? "numwin" : "win", c: "numchart", f: "fox" }[code[0]];
    add(svg, "use", { href: "#" + symbol });
    if (code.length > 1) add(svg, "text", { x: 9, y: code[0] === "w" ? 13 : 10 }, code[1]);
    templates.appendChild(button);
});
```
